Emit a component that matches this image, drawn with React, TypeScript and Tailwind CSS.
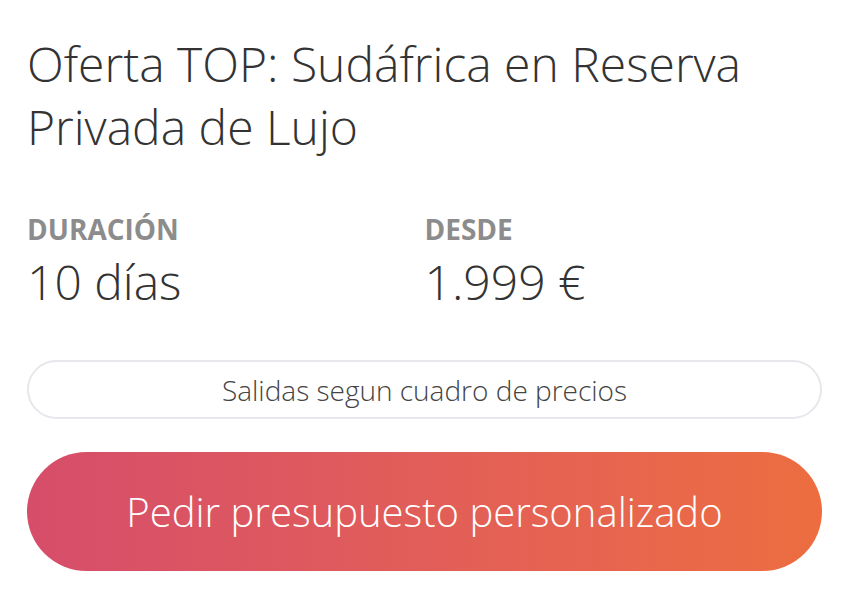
export default function App() {
  return (
    <div className="min-h-screen bg-white font-['Open_Sans',sans-serif]">
      <div className="w-[795px] pl-[27px] pt-[32px] box-content">
        <h1 className="text-[48px] font-light leading-[63px] text-[#333]">
          Oferta TOP: Sudáfrica en Reserva Privada de Lujo
        </h1>

        <div className="mt-[55px] grid grid-cols-2">
          <div>
            <p className="text-[28px] font-bold uppercase leading-[32px] text-[#8c8c8c]">Duración</p>
            <p className="mt-[13px] text-[48px] font-light leading-[48px] text-[#333]">10 días</p>
          </div>
          <div>
            <p className="text-[28px] font-bold uppercase leading-[32px] text-[#8c8c8c]">Desde</p>
            <p className="mt-[13px] text-[48px] font-light leading-[48px] text-[#333]">1.999 €</p>
          </div>
        </div>

        <div className="mt-[54px] flex h-[59px] items-center justify-center rounded-full border-2 border-[#e7e7ec] text-[28px] font-light text-[#444]">
          Salidas segun cuadro de precios
        </div>

        <button
          type="button"
          className="mt-[33px] flex h-[119px] w-full items-center justify-center rounded-full bg-gradient-to-r from-[#d64d6a] to-[#ed6d40] text-[40px] font-light text-white"
        >
          Pedir presupuesto personalizado
        </button>
      </div>
    </div>
  );
}
